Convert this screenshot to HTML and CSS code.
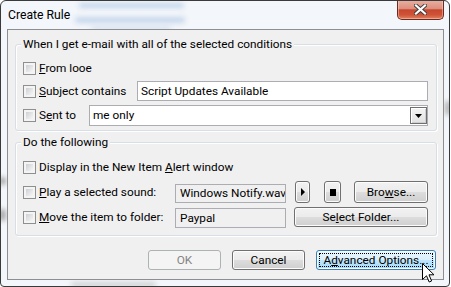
FILE: index.html
```html
<!DOCTYPE html>
<html>
<head>
<meta charset="utf-8">
<link rel="stylesheet" href="styles.css">
</head>
<body>
<div class="window">
  <div class="blob b1"></div>
  <div class="blob b2"></div>
  <div class="blob b3"></div>
  <div class="blob s1"></div>
  <div class="blob s2"></div>
  <div class="blob s3"></div>
  <div class="blob s4"></div>
  <div class="titlebar">
    <span class="title">Create Rule</span>
    <div class="close">
      <svg width="13" height="11" viewBox="0 0 13 11"><path d="M2 1.5 L11 9.5 M11 1.5 L2 9.5" stroke="#3d3d3d" stroke-width="4" stroke-linecap="square"/><path d="M2 1.5 L11 9.5 M11 1.5 L2 9.5" stroke="#ffffff" stroke-width="2.2" stroke-linecap="square"/></svg>
    </div>
  </div>
  <div class="client">
    <div class="group g1">
      <div class="legend">When I get e-mail with all of the selected conditions</div>
      <div class="row r1"><span class="cb"></span><span class="lbl"><u>F</u>rom looe</span></div>
      <div class="row r2"><span class="cb"></span><span class="lbl w98"><u>S</u>ubject contains</span><div class="edit">Script Updates Available</div></div>
      <div class="row r3"><span class="cb"></span><span class="lbl w50">S<u>e</u>nt to</span><div class="combo"><span class="ctext">me only</span><span class="dd"><svg width="7" height="4" viewBox="0 0 7 4"><path d="M0 0 H7 L3.5 4 Z" fill="#000"/></svg></span></div></div>
    </div>
    <div class="group g2">
      <div class="legend">Do the following</div>
      <div class="row q1"><span class="cb"></span><span class="lbl">Display in the New Item <u>A</u>lert window</span></div>
      <div class="row q2"><span class="cb"></span><span class="lbl w136"><u>P</u>lay a selected sound:</span><div class="field f1">Windows Notify.wav</div><div class="btn play"><svg width="4" height="8" viewBox="0 0 4 8"><path d="M0 0 L4 4 L0 8 Z" fill="#000"/></svg></div><div class="btn stop"><span class="sq"></span></div><div class="btn browse">Bro<u>w</u>se...</div></div>
      <div class="row q3"><span class="cb"></span><span class="lbl w136"><u>M</u>ove the item to folder:</span><div class="field f2">Paypal</div><div class="btn selfolder">Se<u>l</u>ect Folder...</div></div>
    </div>
    <div class="actions">
      <div class="btn big disabled">OK</div>
      <div class="btn big">Cancel</div>
      <div class="btn adv"><span class="focus">A<u>d</u>vanced Options...</span></div>
    </div>
  </div>
  <svg class="cursor" width="13" height="21" viewBox="0 0 13 21"><path d="M0.5 0.5 L0.5 16.5 L4.5 12.8 L7.2 19 L9.6 18 L7 11.8 L12 11.8 Z" fill="#fff" stroke="#000" stroke-width="1" stroke-linejoin="miter"/></svg>
</div>
</body>
</html>
```
FILE: styles.css
```css
* { box-sizing: border-box; }
body {
  margin: 0;
  width: 451px;
  height: 287px;
  background: #ffffff;
  font-family: Roboto, "Liberation Sans", sans-serif;
  font-size: 11.8px;
  color: #000;
  overflow: hidden;
}
.window {
  position: relative;
  width: 450px;
  height: 287px;
  border: 1px solid #3a3a3a;
  border-radius: 6px 6px 4px 4px;
  background: #f3f6fa;
  display: flex;
  flex-direction: column;
  overflow: hidden;
}
.blob {
  position: absolute;
  filter: blur(2.5px);
  border-radius: 3px;
}
.b1 { left: 78px; top: 2px; width: 105px; height: 5px; background: #c3d5ec; }
.b2 { left: 74px; top: 16px; width: 110px; height: 6px; background: #c6d7ec; }
.b3 { left: 90px; top: 25px; width: 80px; height: 4px; background: #d3e0ef; }
.s1 { left: -2px; top: 176px; width: 7px; height: 8px; background: #a5a5a5; }
.s2 { left: -2px; top: 208px; width: 7px; height: 12px; background: #a8a8a8; }
.s3 { left: 70px; top: 281px; width: 85px; height: 5px; background: #d0d0d0; }
.s4 { left: 444px; top: 100px; width: 6px; height: 14px; background: #b0b0b0; }
.titlebar {
  position: relative;
  height: 28px;
  flex: none;
  display: flex;
  justify-content: space-between;
  align-items: flex-start;
  padding: 0 5px 0 7px;
}
.title {
  margin-top: 7px;
  line-height: 15px;
  font-size: 12.2px;
}
.close {
  margin-top: -1px;
  width: 47px;
  height: 20px;
  border: 1px solid #6a2a20;
  border-top: none;
  border-radius: 0 0 5px 5px;
  background: linear-gradient(#eab0a2 0%, #dc8f7e 45%, #c8472e 52%, #cf5237 78%, #e0835f 100%);
  box-shadow: inset 0 0 0 1px rgba(255,220,210,0.45);
  display: flex;
  align-items: center;
  justify-content: center;
}
.client {
  position: relative;
  flex: 1;
  margin: 0 5px 6px 6px;
  border: 1px solid #8c8e92;
  background: #f0f0f0;
  padding: 14px 6px 0 7px;
  display: flex;
  flex-direction: column;
}
.group {
  position: relative;
  border: 1px solid #d5dfe5;
  border-radius: 3px;
  box-shadow: inset 1px 1px 0 #fff, 1px 1px 0 #fff;
}
.g1 { padding: 0 8px 4px 7px; }
.g2 { margin-top: 11px; padding: 0 8px 7px 7px; }
.legend {
  position: absolute;
  top: -8px;
  left: 5px;
  padding: 0 2px;
  line-height: 15px;
  background: #f0f0f0;
  white-space: nowrap;
}
.row {
  display: flex;
  align-items: center;
}
.r1 { margin-top: 13px; height: 20px; }
.r2 { margin-top: 3px; height: 20px; }
.r3 { margin-top: 4px; height: 21px; }
.q1 { margin-top: 14px; height: 20px; }
.q2 { margin-top: 4px; height: 22px; }
.q3 { margin-top: 4px; height: 21px; }
.cb {
  flex: none;
  width: 13px;
  height: 13px;
  border: 1px solid #8e8f8f;
  padding: 2px;
  background: linear-gradient(135deg, #cdd0d5, #f6f6f6) content-box, #f4f4f4;
}
.lbl {
  flex: none;
  margin-left: 3px;
  white-space: nowrap;
  line-height: 15px;
}
u { text-underline-offset: 1px; }
.w98 { width: 98px; }
.w50 { width: 50px; }
.w136 { width: 136px; }
.edit {
  flex: 1;
  height: 20px;
  border: 1px solid #abadb3;
  background: #fff;
  padding-left: 3px;
  line-height: 18px;
  white-space: nowrap;
}
.combo {
  flex: 1;
  height: 21px;
  border: 1px solid #abadb3;
  background: #fff;
  display: flex;
  align-items: center;
  justify-content: space-between;
}
.ctext { padding-left: 3px; line-height: 15px; }
.dd {
  width: 17px;
  height: 17px;
  border: 1px solid #6f6f6f;
  box-shadow: inset 1px 1px 0 #fff, inset -1px -1px 0 #cfcfcf;
  background: linear-gradient(#f4f4f4, #e2e2e2);
  display: flex;
  align-items: center;
  justify-content: center;
}
.field {
  flex: none;
  width: 111px;
  border: 1px solid #abadb3;
  background: #f0f0f0;
  padding-left: 4px;
  white-space: nowrap;
  overflow: hidden;
}
.f1 { height: 19px; line-height: 17px; margin-top: 2px; }
.f2 { height: 20px; line-height: 18px; margin-top: 1px; }
.btn {
  flex: none;
  border: 1px solid #707070;
  border-radius: 3px;
  background: linear-gradient(#f2f2f2 0%, #ebebeb 50%, #dddddd 50%, #cfcfcf 100%);
  box-shadow: inset 0 0 0 1px #fcfcfc;
  display: flex;
  align-items: center;
  justify-content: center;
  white-space: nowrap;
  line-height: 15px;
}
.play { margin-left: 9px; width: 15px; height: 22px; }
.stop { margin-left: 14px; width: 17px; height: 22px; }
.sq { width: 6px; height: 7px; background: #000; }
.browse { margin-left: 13px; width: 74px; height: 22px; }
.selfolder { margin-left: 8px; width: 134px; height: 20px; margin-top: -1px; }
.actions {
  margin-top: 14px;
  margin-right: 1px;
  display: flex;
  justify-content: flex-end;
  gap: 11px;
}
.big { width: 73px; height: 20px; }
.disabled {
  border-color: #adb2b5;
  background: #f4f4f4;
  box-shadow: none;
  color: #838383;
}
.adv {
  width: 120px;
  height: 20px;
  border-color: #3c7fb1;
  background: linear-gradient(#eaf6fd 0%, #d9f0fc 50%, #bee6fd 50%, #a7d9f5 100%);
  box-shadow: inset 0 0 0 1px #f4fbff;
  padding: 2px;
}
.focus {
  width: 100%;
  height: 100%;
  border: 1px dotted #000;
  display: flex;
  align-items: center;
  justify-content: center;
}
.cursor {
  position: absolute;
  left: 421px;
  top: 262px;
}
```
